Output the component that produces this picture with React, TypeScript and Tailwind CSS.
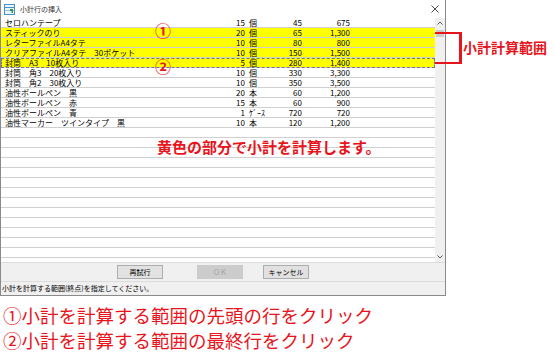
import React from 'react';

type Row = {
  name: string;
  qty: string;
  unit: string;
  price: string;
  amount: string;
  hl?: boolean;
  focus?: boolean;
};

const rows: Row[] = [
  { name: 'セロハンテープ', qty: '15', unit: '個', price: '45', amount: '675' },
  { name: 'スティックのり', qty: '20', unit: '個', price: '65', amount: '1,300', hl: true },
  { name: 'レターファイルA4タテ', qty: '10', unit: '個', price: '80', amount: '800', hl: true },
  { name: 'クリアファイルA4タテ　30ポケット', qty: '10', unit: '個', price: '150', amount: '1,500', hl: true },
  { name: '封筒　A3　10枚入り', qty: '5', unit: '個', price: '280', amount: '1,400', hl: true, focus: true },
  { name: '封筒　角3　20枚入り', qty: '10', unit: '個', price: '330', amount: '3,300' },
  { name: '封筒　角2　30枚入り', qty: '10', unit: '個', price: '350', amount: '3,500' },
  { name: '油性ボールペン　黒', qty: '20', unit: '本', price: '60', amount: '1,200' },
  { name: '油性ボールペン　赤', qty: '15', unit: '本', price: '60', amount: '900' },
  { name: '油性ボールペン　青', qty: '1', unit: 'ｹﾞｰｽ', price: '720', amount: '720' },
  { name: '油性マーカー　ツインタイプ　黒', qty: '10', unit: '本', price: '120', amount: '1,200' },
];

const blanks = Array.from({ length: 14 });

const GridRow = ({ row }: { row: Row }) => (
  <div
    className={`flex h-[10px] shrink-0 items-center border-b border-[#d0d0d0] pl-[4px] leading-[9px] ${
      row.hl ? 'bg-[#ffff00]' : 'bg-white'
    } ${row.focus ? 'outline outline-1 outline-dashed outline-[#777] -outline-offset-1' : ''}`}
  >
    <span className="w-[210px] whitespace-nowrap">{row.name}</span>
    <span className="w-[30px] text-right">{row.qty}</span>
    <span className="w-[22px] pl-[4px] whitespace-nowrap">{row.unit}</span>
    <span className="w-[35px] text-right">{row.price}</span>
    <span className="w-[48px] text-right">{row.amount}</span>
  </div>
);

const TitleIcon = () => (
  <svg width="11" height="11" viewBox="0 0 11 11">
    <rect x="0.5" y="0.5" width="10" height="10" fill="#eaf4fb" stroke="#4a90c8" />
    <line x1="1" y1="3.5" x2="10" y2="3.5" stroke="#4a90c8" />
    <line x1="1" y1="6.5" x2="10" y2="6.5" stroke="#9cc4e4" />
    <path d="M6 5 L9 5 L9 9 L7.5 9 L7.5 7 L6 7 Z" fill="#2e9e3e" />
  </svg>
);

const App = () => {
  return (
    <div className="relative h-[358px] w-[555px] overflow-hidden bg-white font-['Noto_Sans_CJK_JP',sans-serif] text-black">
      {/* dialog window */}
      <div className="flex h-[296px] w-[446px] flex-col border-x border-b border-[#8a8a8a]">
        <div className="flex h-[18px] shrink-0 items-center justify-between bg-white pl-[3px] pr-[4px]">
          <div className="flex items-center gap-[5px]">
            <TitleIcon />
            <span className="text-[7px] text-[#333]">小計行の挿入</span>
          </div>
          <svg width="8" height="8" viewBox="0 0 8 8" className="mr-[2px]">
            <path d="M0.5 0.5 L7.5 7.5 M7.5 0.5 L0.5 7.5" stroke="#333" strokeWidth="0.9" />
          </svg>
        </div>

        <div className="flex h-[244px] shrink-0">
          <div className="flex flex-1 flex-col overflow-hidden text-[8px]">
            {rows.map((r, i) => (
              <GridRow key={i} row={r} />
            ))}
            {blanks.map((_, i) => (
              <div key={i} className="h-[10px] shrink-0 border-b border-[#d0d0d0]" />
            ))}
          </div>
          <div className="flex w-[10px] flex-col items-center justify-between bg-[#f0f0f0] py-[3px]">
            <div className="flex flex-col items-center gap-[5px]">
              <svg width="6" height="4" viewBox="0 0 6 4">
                <polyline points="0.5,3.5 3,1 5.5,3.5" fill="none" stroke="#555" strokeWidth="1" />
              </svg>
              <div className="h-[7px] w-[8px] bg-[#cdcdcd]" />
            </div>
            <svg width="6" height="4" viewBox="0 0 6 4">
              <polyline points="0.5,0.5 3,3 5.5,0.5" fill="none" stroke="#555" strokeWidth="1" />
            </svg>
          </div>
        </div>

        <div className="flex h-[19px] shrink-0 items-center border-t border-[#dcdcdc] bg-[#f0f0f0] pl-[116px] text-[7px]">
          <button className="flex h-[14px] w-[46px] items-center justify-center border border-[#adadad] bg-[#e1e1e1]">
            再試行
          </button>
          <button className="ml-[34px] flex h-[14px] w-[46px] items-center justify-center border border-[#cccccc] bg-[#cccccc] text-[#a0a0a0]">
            ＯＫ
          </button>
          <button className="ml-[20px] flex h-[14px] w-[46px] items-center justify-center border border-[#adadad] bg-[#e1e1e1]">
            キャンセル
          </button>
        </div>

        <div className="flex flex-1 items-center border-t border-[#dcdcdc] bg-[#f0f0f0] pl-[1px] text-[7px]">
          小計を計算する範囲(終点)を指定してください。
        </div>
      </div>

      {/* annotations */}
      <span className="absolute left-[155px] top-[20px] text-[16px] font-bold leading-[20px] text-[#e8141c]">①</span>
      <span className="absolute left-[155px] top-[56px] text-[16px] font-bold leading-[20px] text-[#e8141c]">②</span>
      <div className="absolute left-[435px] top-[32px] h-[32px] w-[27px] border-y-2 border-r-[3px] border-[#e8141c]" />
      <span className="absolute left-[463px] top-[38px] text-[14px] font-bold leading-[18px] text-[#e8141c]">
        小計計算範囲
      </span>
      <span className="absolute left-[157px] top-[137px] text-[15px] font-bold leading-[20px] text-[#e8141c]">
        黄色の部分で小計を計算します。
      </span>

      <div className="pl-[3px] pt-[7px] text-[18.5px] leading-[25px] text-[#e8141c]">
        <div>①小計を計算する範囲の先頭の行をクリック</div>
        <div>②小計を計算する範囲の最終行をクリック</div>
      </div>
    </div>
  );
};

export default App;
